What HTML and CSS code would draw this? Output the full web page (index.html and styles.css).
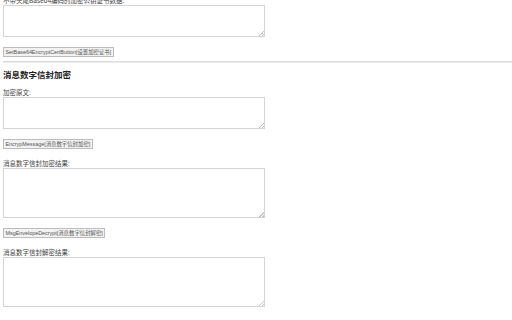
FILE: index.html
```html
<!DOCTYPE html>
<html>
<head>
<meta charset="utf-8">
<link rel="stylesheet" href="styles.css">
</head>
<body>
<div class="page">
  <div class="label">不带头尾Base64编码的加密公钥证书数据:</div>
  <textarea class="box"></textarea>
  <button class="btn">SetBase64EncryptCertButton[设置加密证书]</button>
  <hr class="rule">
  <h3 class="title">消息数字信封加密</h3>
  <div class="label">加密原文:</div>
  <textarea class="box"></textarea>
  <button class="btn">EncrypMessage[消息数字信封加密]</button>
  <div class="label gap">消息数字信封加密结果:</div>
  <textarea class="box tall"></textarea>
  <button class="btn">MsgEnvelopeDecrypt[消息数字信封解密]</button>
  <div class="label gap">消息数字信封解密结果:</div>
  <textarea class="box tall"></textarea>
</div>
</body>
</html>
```
FILE: styles.css
```css
html, body {
  margin: 0;
  padding: 0;
  background: #fff;
}
.page {
  padding: 0 3px;
  margin-top: -3px;
  font-family: "Liberation Sans", "Noto Sans CJK SC", sans-serif;
  color: #444;
}
.label {
  font-size: 6.5px;
  line-height: 8px;
  height: 8px;
  color: #444;
}
.label.gap {
  margin-top: 11px;
}
.box {
  display: block;
  box-sizing: border-box;
  width: 262px;
  height: 32px;
  margin: 0;
  padding: 0;
  border: 1px solid #d4d4d4;
  border-radius: 0;
  resize: none;
  background: #fff linear-gradient(135deg, transparent 45%, #c4c4c4 45%, #c4c4c4 60%, transparent 60%, transparent 75%, #c4c4c4 75%, #c4c4c4 90%, transparent 90%) no-repeat right 0 bottom 0 / 5px 5px;
}
.box.tall {
  height: 50px;
}
.btn {
  display: block;
  box-sizing: border-box;
  height: 10px;
  margin: 10px 0 0;
  padding: 0 1.5px;
  font-family: "Liberation Sans", "Noto Sans CJK SC", sans-serif;
  font-size: 5.4px;
  line-height: 8px;
  color: #555;
  background: #f2f2f2;
  border: 1px solid #bdbdbd;
  border-radius: 0;
}
.rule {
  margin: 4px -3px 0 0;
  height: 0;
  border: 0;
  border-top: 1px solid #dcdcdc;
  border-bottom: 1px solid #ececec;
}
.title {
  margin: 7px 0 9px;
  font-size: 8.5px;
  line-height: 10px;
  font-weight: bold;
  color: #222;
}
```
